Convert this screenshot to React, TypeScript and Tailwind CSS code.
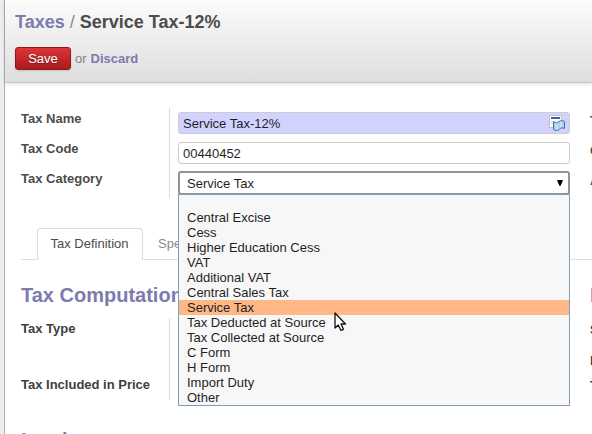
import { useState } from "react";
import type { ReactNode } from "react";

const categories = [
  "",
  "Central Excise",
  "Cess",
  "Higher Education Cess",
  "VAT",
  "Additional VAT",
  "Central Sales Tax",
  "Service Tax",
  "Tax Deducted at Source",
  "Tax Collected at Source",
  "C Form",
  "H Form",
  "Import Duty",
  "Other",
];

function TranslateIcon() {
  return (
    <svg width="16" height="16" viewBox="0 0 16 16" aria-hidden="true">
      <rect x="0.5" y="0.5" width="12" height="12" fill="#fdfdf8" stroke="#c4c4bc" />
      <rect x="2" y="2" width="9" height="2" fill="#3565a8" />
      <path d="M2 6.500h2M2 8.500h2" stroke="#dcdcd4" />
      <path
        d="M4.500 6.500 C6.500 8 8.500 8 10 6.500 C11.500 5.300 13.500 5.300 15.500 6.500 V13.500 C13.500 12.300 12 12.800 10.500 14.300 C8.500 16 6.500 15.800 4.500 14.500 Z"
        fill="#b4d0ec"
        stroke="#3d74b5"
      />
      <path d="M8 9v5.500M12 7v5" stroke="#dceaf8" />
    </svg>
  );
}

function Pointer() {
  return (
    <svg
      className="pointer-events-none absolute top-[117px] left-[155px]"
      width="13"
      height="20"
      viewBox="0 0 13 20"
      aria-hidden="true"
    >
      <path
        d="M1 1 V16 L4.200 13 L7 18.500 L9.500 17.300 L7 12 H11.500 Z"
        fill="#fff"
        stroke="#111"
        strokeWidth="1.300"
        strokeLinejoin="round"
      />
    </svg>
  );
}

function Row({ label, id, next, children }: { label: string; id: string; next: string; children?: ReactNode }) {
  return (
    <div className="flex h-[30px] whitespace-nowrap">
      <label htmlFor={id} className="w-37 shrink-0 pt-[3px] font-bold">
        {label}
      </label>
      <div className="min-w-0 flex-1 border-l border-[#ddd] pl-2">{children}</div>
      <div className="ml-5 w-[2px] pt-[5px] font-bold text-[#4c4c4c]">{next}</div>
    </div>
  );
}

export default function App() {
  const [name, setName] = useState("Service Tax-12%");
  const [code, setCode] = useState("00440452");
  const [category, setCategory] = useState("Service Tax");

  return (
    <div className="flex h-screen overflow-hidden bg-[#eeeef0] pl-1 font-['Liberation_Sans',Arial,sans-serif] text-[13px] leading-[15px] text-[#4c4c4c]">
      <div className="min-w-0 flex-1 border-l border-[#afafb6] bg-white">
        <header className="h-[83px] border-b border-[#c8c8c8] bg-linear-to-b from-[#fcfcfc] to-[#dedede] px-[10px] pt-3 shadow-[0_1px_4px_rgba(0,0,0,0.15)]">
          <h1 className="text-[18px] leading-5 font-bold">
            <a href="#taxes" className="text-[#7c7bad]">
              Taxes
            </a>
            <span className="font-normal text-[#8a8a8a]"> / </span>
            Service Tax-12%
          </h1>
          <div className="mt-[15px] flex items-center">
            <button
              type="button"
              className="h-[23px] w-14 rounded-[3px] border border-[#901818] bg-linear-to-b from-[#dc3538] to-[#a81a1e] text-white shadow-[0_1px_2px_rgba(0,0,0,0.15)] [text-shadow:0_1px_1px_rgba(0,0,0,0.3)]"
            >
              Save
            </button>
            <span className="ml-1 text-[#808080]">or</span>
            <a href="#discard" className="ml-1 font-bold text-[#7c7bad]">
              Discard
            </a>
          </div>
        </header>

        <main className="pt-[25px] pl-4">
          <form>
            <Row label="Tax Name" id="name" next="T">
              <div className="relative pt-1">
                <input
                  id="name"
                  value={name}
                  onChange={(e) => setName(e.target.value)}
                  className="block h-[22px] w-full rounded-[3px] border border-[#ccc] bg-[#d2d2ff] pt-px pr-6 pl-1 text-[#1f1f1f]"
                />
                <button type="button" aria-label="Translate" className="absolute top-[7px] right-[5px]">
                  <TranslateIcon />
                </button>
              </div>
            </Row>
            <Row label="Tax Code" id="code" next="C">
              <div className="pt-1">
                <input
                  id="code"
                  value={code}
                  onChange={(e) => setCode(e.target.value)}
                  className="block h-[22px] w-full rounded-[3px] border border-[#ccc] bg-white pt-px pl-1 text-[#1f1f1f]"
                />
              </div>
            </Row>
            <Row label="Tax Category" id="category" next="A">
              <div className="relative pt-[3px] text-[#1f1f1f]">
                <select
                  id="category"
                  value={category}
                  onChange={(e) => setCategory(e.target.value)}
                  className="block h-6 w-full appearance-none rounded-[3px] border-2 border-[#929292] bg-white pt-px pl-[7px]"
                >
                  {categories.map((c) => (
                    <option key={c}>{c}</option>
                  ))}
                </select>
                <svg
                  className="pointer-events-none absolute top-3 right-[7px]"
                  width="6"
                  height="6"
                  viewBox="0 0 6 6"
                  aria-hidden="true"
                >
                  <path d="M0 0H6L3.500 6H2.500Z" fill="#000" />
                </svg>
                <div className="absolute top-[26px] right-0 left-0 z-10 border border-[#7f9db9] bg-[#f7f7f7]">
                  <ul role="listbox" aria-label="Tax Category">
                    {categories.map((c) => (
                      <li
                        key={c}
                        role="option"
                        aria-selected={c === category}
                        onClick={() => setCategory(c)}
                        className="h-[15px] pl-2 aria-selected:bg-[#ffb786]"
                      >
                        {c}
                      </li>
                    ))}
                  </ul>
                  <Pointer />
                </div>
              </div>
            </Row>
          </form>

          <div role="tablist" className="mt-[30px] flex h-8 items-end border-b border-[#ddd] pl-4">
            <button
              type="button"
              role="tab"
              aria-selected="true"
              className="-mb-px h-8 w-[106px] rounded-t-[4px] border border-b-0 border-[#ddd] bg-white pr-px pb-[2px] whitespace-nowrap"
            >
              Tax Definition
            </button>
            <button type="button" role="tab" aria-selected="false" className="h-8 pl-[15px] text-[#8a8a8a]">
              Special
            </button>
          </div>

          <section>
            <div className="mt-[23px] flex text-[20px] leading-6 font-bold text-[#7c7bad]">
              <h2 className="flex-1">Tax Computation</h2>
              <h2 className="w-[2px]">R</h2>
            </div>
            <div className="mt-[11px] flex h-[82px]">
              <div className="w-37 pt-[3px] font-bold whitespace-nowrap text-[#404040]">
                <p>Tax Type</p>
                <p className="mt-[41px]">Tax Included in Price</p>
              </div>
              <div className="flex-1 border-l border-[#ddd]" />
              <div className="w-[2px] pt-1 font-bold text-[#404040]">
                <p>S</p>
                <p className="mt-4">E</p>
                <p className="mt-[10px]">T</p>
              </div>
            </div>
            <h2 className="mt-7 text-[20px] leading-6 font-bold text-[#7c7bad]">Invoices</h2>
          </section>
        </main>
      </div>
    </div>
  );
}
